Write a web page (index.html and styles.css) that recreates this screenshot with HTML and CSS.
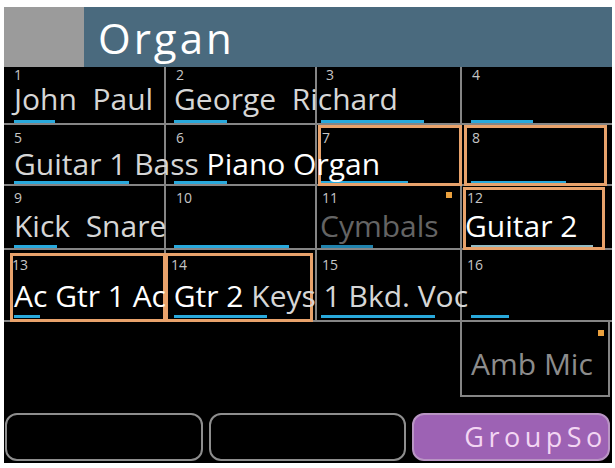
FILE: index.html
```html
<!DOCTYPE html>
<html lang="en">
<head>
<meta charset="utf-8">
<title>Organ</title>
<link rel="stylesheet" href="styles.css">
</head>
<body>
<div class="screen">
  <header class="title-bar">
    <div class="title-back"></div>
    <div class="title">Organ</div>
  </header>

  <div class="mixer">
    <div class="row r1">
      <div class="ch"><span class="num">1</span><span class="name lt">John  Paul</span><i class="lvl" style="width:41px"></i></div>
      <div class="ch"><span class="num">2</span><span class="name lt">George  Richard</span><i class="lvl" style="width:53px"></i></div>
      <div class="ch"><span class="num">3</span><i class="lvl" style="width:103px"></i></div>
      <div class="ch"><span class="num">4</span><i class="lvl" style="width:62px"></i></div>
    </div>

    <div class="row r2">
      <div class="ch"><span class="num">5</span><span class="name"><span class="lt">Guitar 1 Bass </span><span class="wt">Piano Organ</span></span><i class="lvl" style="width:115px"></i></div>
      <div class="ch"><span class="num">6</span><i class="lvl" style="width:53px"></i></div>
      <div class="ch tight sel s7"><span class="num">7</span><i class="lvl" style="width:87px"></i></div>
      <div class="ch sel s8"><span class="num">8</span><i class="lvl" style="width:95px"></i></div>
    </div>

    <div class="row r3">
      <div class="ch"><span class="num">9</span><span class="name lt">Kick  Snare</span><i class="lvl" style="width:43px"></i></div>
      <div class="ch"><span class="num">10</span><i class="lvl" style="width:115px"></i></div>
      <div class="ch tight tight-name off"><span class="num">11</span><span class="name dim">Cymbals</span><b class="flag f11"></b><i class="lvl" style="width:52px"></i></div>
      <div class="ch tight tight-name sel s12"><span class="num">12</span><span class="name wt">Guitar 2</span><i class="lvl pale" style="width:122px"></i></div>
    </div>

    <div class="row r4">
      <div class="ch sel s13"><span class="num">13</span><span class="name"><span class="wt">Ac Gtr 1 Ac Gtr 2</span><span class="lt"> Keys 1 Bkd. Voc</span></span><i class="lvl" style="width:26px"></i></div>
      <div class="ch tight sel s14"><span class="num">14</span><i class="lvl" style="width:93px"></i></div>
      <div class="ch tight"><span class="num">15</span><i class="lvl" style="width:114px"></i></div>
      <div class="ch tight"><span class="num">16</span><i class="lvl" style="width:38px"></i></div>
    </div>

    <div class="row r5">
      <div class="blank"></div>
      <div class="blank"></div>
      <div class="blank edge"></div>
      <div class="amb"><b class="flag f20"></b><span class="name muted">Amb Mic</span></div>
    </div>
  </div>

  <div class="buttons">
    <div class="btn"></div>
    <div class="btn"></div>
    <div class="btn on">GroupSo</div>
  </div>
</div>
</body>
</html>
```

FILE: styles.css
```css
* {
  box-sizing: border-box;
}

html,
body {
  margin: 0;
  background: #ffffff;
}

body {
  font-family: "Open Sans", "Noto Sans", sans-serif;
}

.screen {
  width: 608px;
  height: 456px;
  margin: 7px 0 0 4px;
  background: #000000;
  display: flex;
  flex-direction: column;
  overflow: hidden;
}

/* ---- title bar ---- */
.title-bar {
  display: flex;
  flex: none;
  height: 60px;
}

.title-back {
  width: 80px;
  background: #9b9b9b;
}

.title {
  flex: 1;
  background: #4a6a7e;
  color: #ffffff;
  font-size: 42px;
  line-height: 61px;
  letter-spacing: 3px;
  padding-left: 14px;
}

/* ---- channel grid ---- */
.row {
  display: grid;
  grid-template-columns: 162px 151px 145px 150px;
  height: var(--h);
}

.r1 { --h: 58px; --pt: 1px; --gap: 1px; --mb: 0px; }
.r2 { --h: 61px; --pt: 6px; --gap: 3px; --mb: 0px; }
.r3 { --h: 64px; --pt: 5px; --gap: 5px; --mb: 0px; }
.r4 { --h: 72px; --pt: 8px; --gap: 8px; --mb: 2px; }
.r5 { --h: 75px; }

.ch {
  position: relative;
  display: flex;
  flex-direction: column;
  align-items: flex-start;
  padding-top: var(--pt);
  border-right: 2px solid #858585;
  border-bottom: 2px solid #858585;
}

.row > :nth-child(1) { --nl: 10px; --tl: 10px; --bl: 10px; }
.row > :nth-child(2) { --nl: 10px; --tl: 8px; --bl: 8px; }
.row > :nth-child(3) { --nl: 9px; --tl: 8px; --bl: 4px; }
.row > :nth-child(4) { --nl: 10px; --tl: 10px; --bl: 9px; }

.row > .ch:nth-child(4) {
  border-right: 0;
}

.row > .tight { --nl: 5px; }
.row > .tight-name { --tl: 3px; }
.row > .s13 { --nl: 8px; }

/* channel number and name sit above the selection frame */
.num,
.name {
  position: relative;
  z-index: 1;
}

.num {
  display: block;
  height: 14px;
  margin-left: var(--nl);
  font-size: 14px;
  line-height: 14px;
  color: #c6c6c6;
}

.name {
  display: block;
  height: 32px;
  margin-top: var(--gap);
  margin-left: var(--tl);
  font-size: 30px;
  line-height: 32px;
  white-space: pre;
}

.lt { color: #d6d6d6; }
.wt { color: #ffffff; }
.dim { color: #646464; }
.muted { color: #8c8c8c; }

.lvl {
  display: block;
  height: 3px;
  margin-top: auto;
  margin-left: var(--bl);
  margin-bottom: var(--mb);
  background: #29a9dc;
}

.off .lvl { background: #2183ad; }
.lvl.pale { background: #94bcc4; }

/* selected channels get an orange frame */
.sel::after {
  content: "";
  position: absolute;
  top: var(--st, 0px);
  left: var(--sl, 0px);
  right: var(--sr, -2px);
  bottom: var(--sb, -2px);
  border: 3px solid #e8a26b;
}

.s7 { --sl: 1px; }
.s8 { --sl: 2px; --sr: 5px; }
.s12 { --st: 1px; --sl: 1px; --sr: 7px; }
.s13 { --st: 3px; --sl: 6px; }
.s14 { --st: 3px; --sl: -1px; --sr: 2px; }

/* small orange marker in the corner of a channel */
.flag {
  position: absolute;
  width: 6px;
  height: 6px;
  background: #eba13e;
}

.f11 { top: 6px; right: 8px; }
.f20 { top: 8px; right: 4px; }

.blank.edge {
  border-right: 2px solid #858585;
}

.amb {
  position: relative;
  margin-right: 2px;
  border-right: 2px solid #858585;
  border-bottom: 2px solid #858585;
}

.amb .name {
  margin-top: 26px;
  margin-left: 9px;
}

/* ---- bottom buttons ---- */
.buttons {
  display: grid;
  grid-template-columns: repeat(3, minmax(0, 1fr));
  gap: 6px;
  height: 48px;
  margin-top: 16px;
  padding: 0 2px 0 1px;
  flex: none;
}

.btn {
  min-width: 0;
  border: 2px solid #8e8e8e;
  border-radius: 12px;
}

.btn.on {
  background: #9d62b4;
  border-color: #b995c4;
  color: #f3d6f3;
  font-size: 27px;
  line-height: 44px;
  letter-spacing: 4.5px;
  padding-left: 50px;
  white-space: nowrap;
  overflow: hidden;
}
```
